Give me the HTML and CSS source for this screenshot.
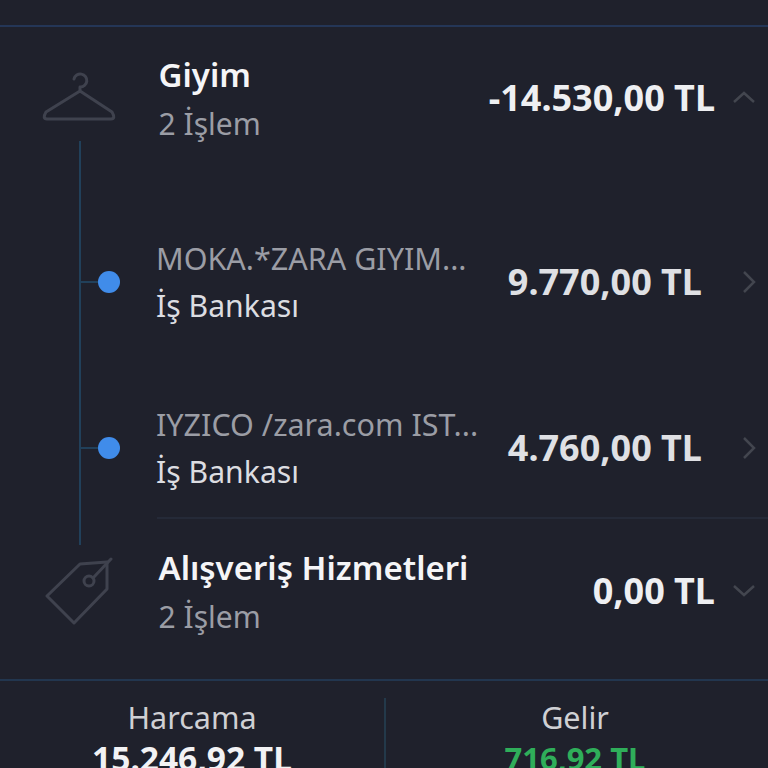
FILE: index.html
```html
<!DOCTYPE html>
<html lang="tr">

<head>
    <meta charset="UTF-8">
    <meta name="viewport" content="width=device-width, initial-scale=1.0">
    <title>Harcamalar</title>
    <link rel="stylesheet" href="styles.css">
</head>

<body>
    <div class="screen">
        <div class="top-bar"></div>

        <div class="category-list">
            <div class="category category-open">
                <div class="category-icon">
                    <svg width="74" height="54" viewBox="0 0 74 54" fill="none" stroke="#3f424e" stroke-width="3" stroke-linecap="round" stroke-linejoin="round">
                        <path d="M32 9 a6.5 6.5 0 1 1 6 8 l0 4 M38 21 L4 42 Q0 49 5 49 H69 Q74 49 70 42 L38 21"/>
                    </svg>
                </div>
                <div class="category-info">
                    <div class="category-name">Giyim</div>
                    <div class="category-count">2 İşlem</div>
                </div>
                <div class="category-amount">-14.530,00 TL</div>
                <svg class="chevron" width="24" height="14" viewBox="0 0 24 14" fill="none" stroke="#43464f" stroke-width="2.5">
                    <path d="M2 12 L12 3 L22 12"/>
                </svg>
            </div>

            <div class="transactions">
                <div class="transaction">
                    <div class="dot-col"><span class="stub"></span><span class="dot"></span></div>
                    <div class="transaction-info">
                        <div class="merchant">MOKA.*ZARA GIYIM...</div>
                        <div class="bank">İş Bankası</div>
                    </div>
                    <div class="transaction-amount">9.770,00 TL</div>
                    <svg class="chevron-right" width="14" height="24" viewBox="0 0 14 24" fill="none" stroke="#43464f" stroke-width="2.5">
                        <path d="M2 2 L12 12 L2 22"/>
                    </svg>
                </div>
                <div class="transaction">
                    <div class="dot-col"><span class="stub"></span><span class="dot"></span></div>
                    <div class="transaction-info">
                        <div class="merchant">IYZICO /zara.com IST...</div>
                        <div class="bank">İş Bankası</div>
                    </div>
                    <div class="transaction-amount">4.760,00 TL</div>
                    <svg class="chevron-right" width="14" height="24" viewBox="0 0 14 24" fill="none" stroke="#43464f" stroke-width="2.5">
                        <path d="M2 2 L12 12 L2 22"/>
                    </svg>
                </div>
            </div>
            <div class="divider"></div>

            <div class="category category-closed">
                <div class="category-icon">
                    <svg width="70" height="68" viewBox="0 0 70 68" fill="none" stroke="#3f424e" stroke-width="3" stroke-linejoin="round" stroke-linecap="round">
                        <path d="M3 39 L36 7 L63 5 L63 32 L30 66 Z"/>
                        <circle cx="45" cy="24" r="5"/>
                        <path d="M49 21 L67 2"/>
                    </svg>
                </div>
                <div class="category-info">
                    <div class="category-name">Alışveriş Hizmetleri</div>
                    <div class="category-count">2 İşlem</div>
                </div>
                <div class="category-amount">0,00 TL</div>
                <svg class="chevron" width="24" height="14" viewBox="0 0 24 14" fill="none" stroke="#43464f" stroke-width="2.5">
                    <path d="M2 2 L12 11 L22 2"/>
                </svg>
            </div>
        </div>

        <div class="summary">
            <div class="summary-col">
                <div class="summary-label">Harcama</div>
                <div class="summary-value">15.246,92 TL</div>
            </div>
            <div class="summary-col summary-income">
                <div class="summary-label">Gelir</div>
                <div class="summary-value">716,92 TL</div>
            </div>
        </div>
    </div>
</body>

</html>
```

FILE: styles.css
```css
html,
body {
    margin: 0;
    height: 100%;
    background: #1f212c;
}

body {
    font-family: "Noto Sans", "Open Sans", sans-serif;
    overflow: hidden;
}

.screen {
    height: 768px;
    overflow: hidden;
    background: #1f212c;
    color: #f2f2f4;
}

.top-bar {
    height: 25px;
    border-bottom: 2px solid #243657;
}

/* vertical line that joins the two category icons */
.category-list {
    background: linear-gradient(#21405a, #21405a) 79px 114px / 2px 404px no-repeat;
    border-bottom: 2px solid #22364f;
}

.category {
    display: flex;
    align-items: flex-start;
}

.category-open {
    height: 114px;
}

.category-closed {
    height: 159px;
}

.category-icon {
    width: 158.5px;
    flex-shrink: 0;
    display: flex;
}

.category-open .category-icon svg {
    margin: 43px 0 0 42px;
}

.category-closed .category-icon svg {
    margin: 37px 0 0 44px;
}

.category-info {
    flex: 1;
    padding-top: 26px;
}

.category-name {
    font-size: 33px;
    font-weight: 600;
    line-height: 44px;
    color: #f5f5f7;
    white-space: nowrap;
}

.category-count {
    font-size: 30px;
    line-height: 54px;
    color: #9b9da5;
}

.category-amount {
    font-size: 36px;
    font-weight: 700;
    line-height: 44px;
    color: #eeeff2;
    white-space: nowrap;
}

.category-open .category-amount {
    margin-top: 49px;
}

.category-closed .category-amount {
    margin-top: 49px;
}

.chevron {
    flex-shrink: 0;
    margin: 0 12px 0 17px;
}

.category-open .chevron {
    margin-top: 63px;
}

.category-closed .chevron {
    margin-top: 64px;
}

.transactions {
    display: flex;
    flex-direction: column;
    gap: 46px;
    padding: 81px 0 9px;
}

.transaction {
    display: flex;
    align-items: center;
    height: 120px;
}

.dot-col {
    width: 157px;
    flex-shrink: 0;
    display: flex;
    align-items: center;
    padding-left: 80px;
    box-sizing: border-box;
}

.stub {
    width: 18px;
    height: 2px;
    background: #21405a;
}

.dot {
    width: 22px;
    height: 22px;
    border-radius: 50%;
    background: #408cea;
}

.transaction-info {
    flex: 1;
    min-width: 0;
    margin-left: -1px;
}

.merchant {
    font-size: 30.5px;
    line-height: 48px;
    color: #9b9da5;
    white-space: nowrap;
}

.bank {
    font-size: 30.2px;
    line-height: 48px;
    color: #dcdde1;
}

.transaction-amount {
    font-size: 36px;
    font-weight: 700;
    color: #dfe0e4;
    white-space: nowrap;
    margin-top: -2px;
}

.chevron-right {
    flex-shrink: 0;
    margin: 0 12px 0 40px;
}

.divider {
    height: 2px;
    margin: 0 0 1px 157px;
    background: #252a38;
}

.summary {
    display: flex;
    padding-top: 17px;
}

.summary-col {
    width: 384px;
    height: 90px;
    text-align: center;
    box-sizing: border-box;
}

.summary-income {
    border-left: 2px solid #23394a;
    padding-right: 4px;
}

.summary-label {
    font-size: 30.5px;
    line-height: 38px;
    color: #cfd0d4;
}

.summary-value {
    font-size: 33.5px;
    font-weight: 700;
    line-height: 44px;
    color: #f2f2f4;
}

.summary-income .summary-value {
    font-size: 31px;
    color: #2fae5a;
}
```
